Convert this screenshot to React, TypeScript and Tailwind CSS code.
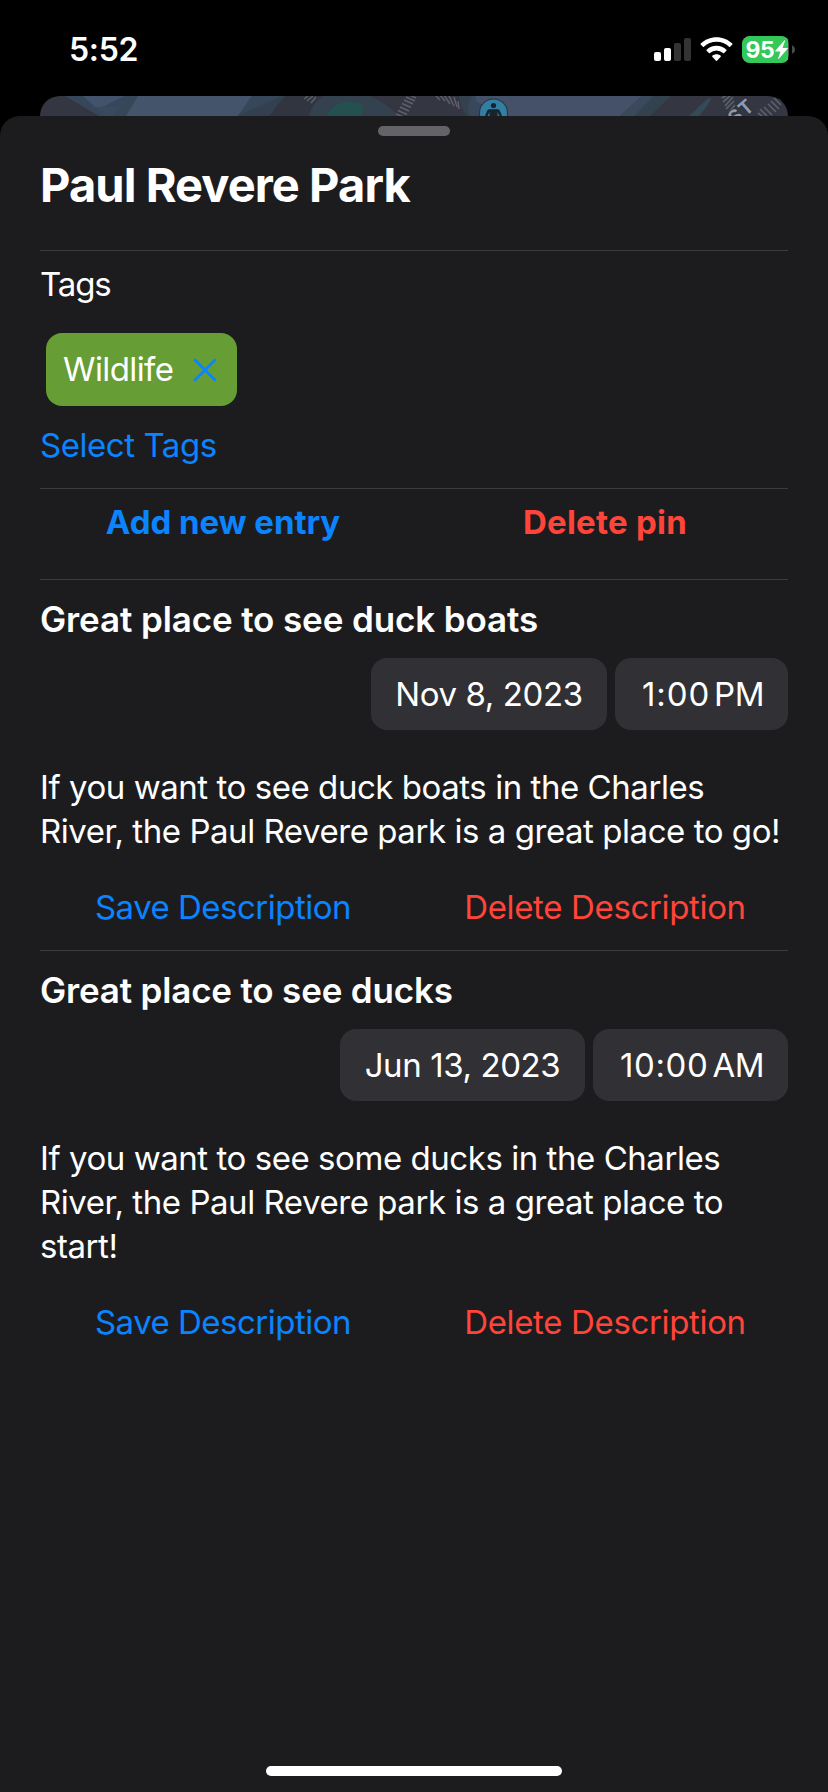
import type { ReactNode } from "react";

type Entry = {
  title: string;
  titleTracking: string;
  date: string;
  dateWidth: string;
  time: string;
  timeTracking: string;
  period: string;
  timeWidth: string;
  lines: string[];
};

const entries: Entry[] = [
  {
    title: "Great place to see duck boats",
    titleTracking: "tracking-[-0.12px]",
    date: "Nov 8, 2023",
    dateWidth: "w-[236px]",
    time: "1:00",
    timeTracking: "tracking-[0.9px]",
    period: "PM",
    timeWidth: "w-[173px]",
    lines: [
      "If you want to see duck boats in the Charles",
      "River, the Paul Revere park is a great place to go!",
    ],
  },
  {
    title: "Great place to see ducks",
    titleTracking: "tracking-[-0.18px]",
    date: "Jun 13, 2023",
    dateWidth: "w-[245px]",
    time: "10:00",
    timeTracking: "tracking-[0.6px]",
    period: "AM",
    timeWidth: "w-[195px]",
    lines: [
      "If you want to see some ducks in the Charles",
      "River, the Paul Revere park is a great place to",
      "start!",
    ],
  },
];

function StatusBar() {
  return (
    <header className="flex h-24 items-start justify-between pl-[69px] pr-[33px] pt-[29px]">
      <span className="mt-px text-[32px] font-semibold leading-10 tracking-[-0.3px]">5:52</span>
      <div className="flex pt-[7px]">
        <svg width="142" height="28" viewBox="652 36 142 28" fill="none">
          <rect x="653" y="52" width="7" height="9" rx="2" fill="#fff" />
          <rect x="663" y="48" width="7" height="13" rx="2" fill="#fff" />
          <rect x="673" y="43" width="7" height="18" rx="2" fill="#333" />
          <rect x="683" y="38" width="7" height="23" rx="2" fill="#333" />
          <path d="M715.5 37.3c6.100 0 11.700 2.400 15.800 6.300.3.3.3.7 0 1l-2.200 2.200c-.3.3-.7.3-1 0a18.300 18.300 0 0 0-25.200 0c-.3.3-.7.3-1 0l-2.200-2.200c-.3-.3-.3-.7 0-1 4.100-3.900 9.700-6.300 15.800-6.300Z" fill="#fff" />
          <path d="M715.5 45.800c3.800 0 7.300 1.500 9.900 4 .3.3.3.7 0 1l-2.300 2.300c-.3.3-.7.3-1 0a9.600 9.600 0 0 0-13.200 0c-.3.3-.7.3-1 0l-2.300-2.300c-.3-.3-.3-.7 0-1 2.600-2.500 6.100-4 9.900-4Z" fill="#fff" />
          <path d="M715.5 54.300c1.600 0 3 .5 4.200 1.500.3.3.3.7 0 1l-3.700 3.900c-.3.3-.7.3-1 0l-3.700-3.900c-.3-.3-.3-.7 0-1 1.200-1 2.600-1.500 4.200-1.500Z" fill="#fff" />
          <path d="M749 36h31a8 8 0 0 1 8 8v11a8 8 0 0 1-8 8h-31a8 8 0 0 1-8-8V44a8 8 0 0 1 8-8Z" fill="#4a4a4c" />
          <path d="M749 36h31c3 0 5.500 1.200 7 3.600v19.800c-1.500 2.400-4 3.600-7 3.600h-31a8 8 0 0 1-8-8V44a8 8 0 0 1 8-8Z" fill="#34c759" />
          <path d="M791 45.200c2 .7 3 2.300 3 4.300s-1 3.600-3 4.300Z" fill="#4a4a4c" />
          <text x="744.600" y="57.700" fill="#fff" fontSize="23" fontWeight="700" letterSpacing="-0.5" fontFamily="Inter, sans-serif">95</text>
          <path d="M783.300 40.500 774.300 50.700c-.3.4-.1.700.3.700h4.800l-2.200 7c-.2.700.3.900.7.400l8.700-10c.4-.4.200-.8-.3-.8h-4.800l2.500-7.100c.2-.6-.3-.9-.7-.4Z" fill="#fff" />
        </svg>
      </div>
    </header>
  );
}

function MapStrip() {
  return (
    <svg className="mx-10 block h-5 w-[748px] rounded-t-[20px]" viewBox="0 0 748 20" fill="none">
      <rect width="748" height="20" fill="#343741" />
      <path d="M25 0H218L197 20H59Z" fill="#36475a" />
      <path d="M43 0H85L62 11H55Z" fill="#43536b" />
      <path d="M55 11h24l-7 9H65Z" fill="#394a5e" />
      <path d="M98 0H212L198 20H86Z" fill="#44556b" />
      <path d="M212 0H242L229 20H198Z" fill="#36475a" />
      <path d="M242 0h14q-18 9-27 20h-32Z" fill="#33404f" />
      <path d="M246 0h50q-20 6-27 20H230Q237 8 246 0Z" fill="#31353f" />
      <path d="M283 0h47q18 8 28 20h-89q3-13 14-20Z" fill="#34414f" />
      <path d="M287 20q7-14 20-14t13 2q5 1 3 7l-2 5Z" fill="#24504f" />
      <g stroke="#5d606c" strokeWidth="1.500">
        <path d="m264 3 4-3M267 5l6-5M271 7l5-6" />
        <path d="m366 1 9 4M364 4l9 4M362 7.500l9 4M360 11l9 4M358 14.500l9 4M356 18l8 3M368-2l8 4" />
        <path d="m396 0 4 4M400-1l5 6M404-1l6 9M409 0l5 10M414 1l3 10M418 5l1 8" />
      </g>
      <path d="M419 0h19q-2 8 11 20h-22q-7-9-8-20Z" fill="#34414f" />
      <path d="M432 0h12l12 20h-26q-5-12 2-20Z" fill="#3a4b60" opacity=".75" />
      <path d="M435 0H602L580 20H456q-9-10-19-14Z" fill="#445169" />
      <path d="M602 0H614L596 20H580Z" fill="#3a495c" />
      <path d="M614 0H631L610 20H594Z" fill="#34414f" />
      <path d="M649 20 664 6q7-6 7-3-2 5-12 17Z" fill="#334b59" />
      <g stroke="#5d606c" strokeWidth="1.700">
        <path d="m682 2 5-3M683 6l8-7M685 10l8-9M686 13l8-8M689 16l6-7" />
        <path d="m718 17 5 4M720 13l7 7M724 11l8 8M728 8l8 8M731 5l8 8M734 2l7 7M737 0l5 5" />
      </g>
      <circle cx="453.500" cy="17" r="14.500" fill="#263543" />
      <circle cx="453.500" cy="17" r="13.500" fill="#327fa3" />
      <circle cx="453.500" cy="9.500" r="2.600" fill="#17232e" />
      <path d="M449.500 13.200h8c2 0 2.500 1.500 3 3l1.500 3.800h-2.500l-2-4v5h-8v-5l-2 4H445l1.500-3.800c.5-1.500 1-3 3-3Z" fill="#17232e" />
      <text x="0" y="0" transform="translate(695 30) rotate(-41)" fill="#8f99ae" stroke="#252b36" strokeWidth="1.500" paintOrder="stroke" fontFamily="Inter, sans-serif" fontWeight="700" fontSize="19.500" letterSpacing="1">ST</text>
    </svg>
  );
}

function Divider({ className }: { className: string }) {
  return <div className={`h-px shrink-0 bg-[#3c3c3f] ${className}`} />;
}

function ActionRow({ className, children }: { className: string; children: ReactNode }) {
  return <div className={`grid grid-cols-2 gap-4 text-center ${className}`}>{children}</div>;
}

function EntryCard({ entry }: { entry: Entry }) {
  return (
    <section className="flex flex-col">
      <h2 className={`mt-[17px] text-[35px] font-semibold ${entry.titleTracking}`}>{entry.title}</h2>
      <div className="mt-[17px] flex justify-end gap-2">
        <div className={`flex h-[72px] items-center justify-center whitespace-nowrap rounded-2xl bg-[#313035] pb-px tracking-[-0.4px] ${entry.dateWidth}`}>
          {entry.date}
        </div>
        <div className={`flex h-[72px] items-center justify-end gap-1 rounded-2xl bg-[#313035] pb-px pr-6 ${entry.timeWidth}`}>
          <span className={entry.timeTracking}>{entry.time}</span>
          <span className="tracking-[-0.5px]">{entry.period}</span>
        </div>
      </div>
      <p className="mt-[35px] whitespace-nowrap tracking-[-0.45px]">
        {entry.lines.map((line) => (
          <span key={line} className="block">{line}</span>
        ))}
      </p>
      <ActionRow className="mt-8">
        <button className="tracking-[-0.5px] text-[#0a84ff]">Save Description</button>
        <button className="tracking-[-0.35px] text-[#ff453a]">Delete Description</button>
      </ActionRow>
    </section>
  );
}

export default function App() {
  return (
    <div className="flex h-[1792px] w-[828px] flex-col overflow-hidden bg-black font-['Inter',sans-serif] text-white">
      <StatusBar />
      <MapStrip />
      <main className="flex flex-1 flex-col rounded-t-[20px] bg-[#1c1c1e] px-10 text-[33px] leading-[44px]">
        <div className="mt-2.5 h-2.5 w-[72px] self-center rounded-full bg-[#646368]" />
        <h1 className="mt-[21px] text-[47px] font-bold leading-[56px] tracking-[-0.92px]">Paul Revere Park</h1>
        <Divider className="mt-[37px]" />
        <p className="mt-[11px] tracking-[-1.1px]">Tags</p>
        <div className="ml-1.5 mt-[27px] flex h-[73px] w-[191px] items-center gap-5 rounded-2xl bg-[#669d34] pb-0.5 pl-[17px]">
          <span className="tracking-[-0.6px]">Wildlife</span>
          <svg className="mt-0.5" width="24" height="24" viewBox="0 0 24 24" fill="none" stroke="#0a84ff" strokeWidth="2.800" strokeLinecap="round">
            <path d="M2 2 22 22M22 2 2 22" />
          </svg>
        </div>
        <button className="mt-[17px] self-start tracking-[-0.45px] text-[#0a84ff]">Select Tags</button>
        <Divider className="mt-[21px]" />
        <ActionRow className="mt-[11px] font-bold">
          <button className="tracking-[-0.05px] text-[#0a84ff]">Add new entry</button>
          <button className="tracking-[0.25px] text-[#ff453a]">Delete pin</button>
        </ActionRow>
        <Divider className="mt-[35px]" />
        <EntryCard entry={entries[0]} />
        <Divider className="mt-[21px]" />
        <EntryCard entry={entries[1]} />
        <div className="mb-4 mt-auto h-2.5 w-[296px] self-center rounded-full bg-white" />
      </main>
    </div>
  );
}
